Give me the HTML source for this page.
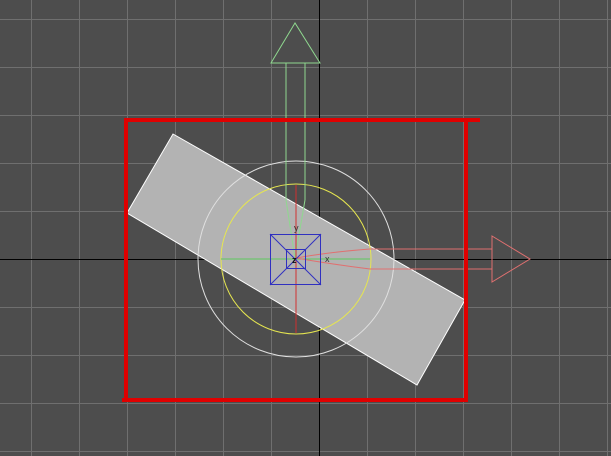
<!DOCTYPE html><html><head><style>html,body{margin:0;padding:0;background:#4d4d4d;overflow:hidden}</style></head><body>
<svg width="611" height="456" xmlns="http://www.w3.org/2000/svg" style="display:block">
<rect width="611" height="456" fill="#4d4d4d"/>
<g stroke="#6f6f6f" stroke-width="1">
<line x1="31.5" y1="0" x2="31.5" y2="456"/><line x1="79.5" y1="0" x2="79.5" y2="456"/><line x1="127.5" y1="0" x2="127.5" y2="456"/><line x1="175.5" y1="0" x2="175.5" y2="456"/><line x1="223.5" y1="0" x2="223.5" y2="456"/><line x1="271.5" y1="0" x2="271.5" y2="456"/><line x1="367.5" y1="0" x2="367.5" y2="456"/><line x1="415.5" y1="0" x2="415.5" y2="456"/><line x1="463.5" y1="0" x2="463.5" y2="456"/><line x1="511.5" y1="0" x2="511.5" y2="456"/><line x1="559.5" y1="0" x2="559.5" y2="456"/><line x1="607.5" y1="0" x2="607.5" y2="456"/>
<line x1="0" y1="19.5" x2="611" y2="19.5"/><line x1="0" y1="67.5" x2="611" y2="67.5"/><line x1="0" y1="115.5" x2="611" y2="115.5"/><line x1="0" y1="163.5" x2="611" y2="163.5"/><line x1="0" y1="211.5" x2="611" y2="211.5"/><line x1="0" y1="307.5" x2="611" y2="307.5"/><line x1="0" y1="355.5" x2="611" y2="355.5"/><line x1="0" y1="403.5" x2="611" y2="403.5"/><line x1="0" y1="451.5" x2="611" y2="451.5"/>
</g>
<line x1="319.5" y1="0" x2="319.5" y2="456" stroke="#000"/>
<line x1="0" y1="259.5" x2="611" y2="259.5" stroke="#000"/>
<polygon points="173,134 465,300 417,385 127,213" fill="#b3b3b3" stroke="#fff" stroke-width="1"/>
<circle cx="296" cy="259" r="98" fill="none" stroke="#e0e0e0" stroke-width="1"/>
<circle cx="296" cy="259" r="75" fill="none" stroke="#e6e650" stroke-width="1"/>
<g fill="none" stroke="#8fd88f" stroke-width="1">
<polygon points="295,23 271,63 320,63"/>
<line x1="286" y1="63" x2="286" y2="200"/><line x1="305" y1="63" x2="305" y2="200"/>
<path d="M286,200 L295,258 L305,200"/>
<line x1="221" y1="259" x2="370" y2="259" stroke="#5cc85c"/>
</g>
<g fill="none" stroke="#e07070" stroke-width="1">
<polygon points="492,236 530,259 492,282"/>
<line x1="370" y1="249" x2="492" y2="249"/><line x1="370" y1="269" x2="492" y2="269"/>
<path d="M370,249 Q330,252 296,258 Q330,264 370,269"/>
</g>
<line x1="296" y1="185" x2="296" y2="333" stroke="#d03030" stroke-width="1"/>
<g fill="none" stroke="#3030c0" stroke-width="1">
<rect x="270.5" y="234.5" width="50" height="50"/>
<rect x="286.5" y="249.5" width="19" height="19"/>
<line x1="270" y1="234" x2="321" y2="285"/><line x1="321" y1="234" x2="270" y2="285"/>
</g>
<text x="294" y="231" font-family="Liberation Sans,sans-serif" font-size="9" fill="#333">y</text>
<text x="325" y="262" font-family="Liberation Sans,sans-serif" font-size="9" fill="#333">x</text>
<text x="292" y="263" font-family="Liberation Sans,sans-serif" font-size="9" fill="#111" font-weight="bold">z</text>
<g stroke="#e00000" stroke-width="4" fill="none">
<path d="M126,400 L126,120 L480,120"/>
<line x1="466" y1="120" x2="466" y2="400"/>
<line x1="122" y1="400" x2="468" y2="400"/>
</g>
</svg>
</body></html>
